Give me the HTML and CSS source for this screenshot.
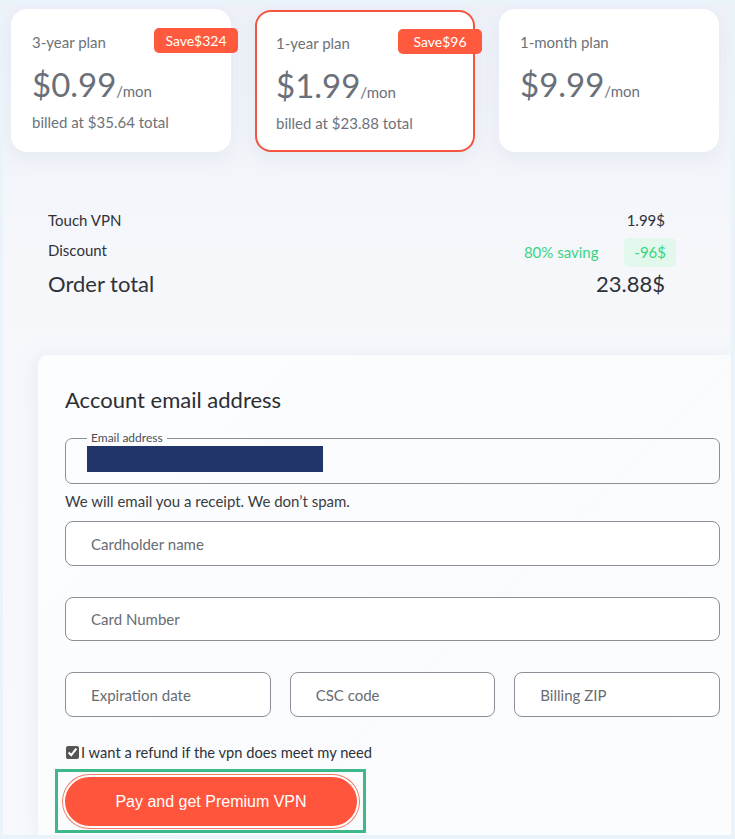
FILE: index.html
```html
<!DOCTYPE html>
<html lang="en">
<head>
    <meta charset="UTF-8">
    <meta name="viewport" content="width=device-width, initial-scale=1.0">
    <title>Touch VPN - Checkout</title>
    <link rel="stylesheet" href="styles.css">
</head>
<body>
    <div id="frame">
        <div id="page">
            <div class="plans">
                <div class="plan">
                    <span class="badge">Save$324</span>
                    <p class="plan-name">3-year plan</p>
                    <p class="plan-price">$0.99<span class="per">/mon</span></p>
                    <p class="plan-billed">billed at $35.64 total</p>
                </div>
                <div class="plan selected">
                    <span class="badge">Save$96</span>
                    <p class="plan-name">1-year plan</p>
                    <p class="plan-price">$1.99<span class="per">/mon</span></p>
                    <p class="plan-billed">billed at $23.88 total</p>
                </div>
                <div class="plan">
                    <p class="plan-name">1-month plan</p>
                    <p class="plan-price">$9.99<span class="per">/mon</span></p>
                </div>
            </div>

            <div class="summary">
                <div class="row">
                    <span>Touch VPN</span>
                    <span>1.99$</span>
                </div>
                <div class="row discount">
                    <span class="label">Discount</span>
                    <span class="saving">80% saving <span class="pill">-96$</span></span>
                </div>
                <div class="row total">
                    <span>Order total</span>
                    <span>23.88$</span>
                </div>
            </div>

            <form class="checkout">
                <h2>Account email address</h2>
                <fieldset class="email">
                    <legend>Email address</legend>
                    <div class="redacted"></div>
                </fieldset>
                <p class="note">We will email you a receipt. We don’t spam.</p>

                <input class="field" type="text" placeholder="Cardholder name">
                <input class="field spaced" type="text" placeholder="Card Number">
                <div class="field-row">
                    <input class="field" type="text" placeholder="Expiration date">
                    <input class="field" type="text" placeholder="CSC code">
                    <input class="field" type="text" placeholder="Billing ZIP">
                </div>

                <label class="refund">
                    <input type="checkbox" checked> I want a refund if the vpn does meet my need
                </label>

                <div class="highlight">
                    <button type="button" id="pay-button">Pay and get Premium VPN</button>
                </div>
            </form>
        </div>
    </div>
</body>
</html>
```

FILE: styles.css
```css
* {
    box-sizing: border-box;
}

body {
    margin: 0;
    font-family: Lato, "Open Sans", sans-serif;
    background-color: #eaf3f9;
}

#frame {
    padding: 4px 4px 4px 3px;
    height: 839px;
}

#page {
    height: 831px;
    background: linear-gradient(180deg, #eef1f8 0%, #f5f7fb 30%, #f7f9fc 100%);
    overflow: hidden;
}

p {
    margin: 0;
}

/* plan cards */
.plans {
    display: flex;
    gap: 24px;
    padding: 5px 0 0 8px;
}

.plan {
    position: relative;
    width: 220px;
    height: 143px;
    padding: 21px 19px;
    background: #fff;
    border: 2px solid #fff;
    border-radius: 16px;
    box-shadow: 0 6px 18px rgba(190, 200, 225, 0.25);
    color: #6d7279;
}

.plan.selected {
    border-color: #f5553f;
    height: 142px;
    margin-top: 1px;
}

.plan-name {
    font-size: 15px;
    line-height: 20px;
}

.plan-price {
    margin-top: 12px;
    font-size: 33px;
    line-height: 40px;
    color: #6a7079;
}

.per {
    font-size: 15px;
}

.plan-billed {
    margin-top: 1px;
    font-size: 15px;
    line-height: 20px;
}

.badge {
    position: absolute;
    top: 17px;
    right: -9px;
    width: 84px;
    height: 25px;
    line-height: 25px;
    text-align: center;
    background: #ff5a3d;
    color: #fff;
    font-size: 14px;
    border-radius: 5px;
}

/* order summary */
.summary {
    padding: 58px 66px 0 45px;
    color: #2f3238;
}

.row {
    display: flex;
    justify-content: space-between;
    align-items: center;
    font-size: 15px;
    line-height: 20px;
}

.row.discount {
    margin-top: 8px;
    height: 29px;
}

.row.discount .label {
    margin-top: -5px;
}

.saving {
    color: #3ad47f;
    font-size: 15px;
}

.pill {
    display: inline-block;
    margin-left: 22px;
    margin-right: -11px;
    padding: 0 10px;
    line-height: 29px;
    background: #e2f8ec;
    border-radius: 5px;
}

.row.total {
    margin-top: 3px;
    font-size: 22px;
    line-height: 28px;
}

/* checkout form */
.checkout {
    margin: 57px 0 0 35px;
    height: 480px;
    padding: 31px 11px 0 27px;
    background: linear-gradient(135deg, #fcfdfe 0%, #f9fbfd 60%, #fbfcfd 100%);
    border-radius: 10px 0 0 0;
    box-shadow: -4px 0 16px rgba(200, 210, 230, 0.25);
}

.checkout h2 {
    margin: 0;
    font-size: 22px;
    font-weight: normal;
    line-height: 28px;
    color: #2b2e33;
}

.email {
    margin: 17px 0 0;
    padding: 0 21px 11px;
    border: 1px solid #8b9098;
    border-radius: 7px;
}

.email legend {
    padding: 0 4px;
    font-size: 12px;
    line-height: 14px;
    color: #4a4e55;
}

.redacted {
    width: 236px;
    height: 26px;
    margin-top: 1px;
    background: #22356b;
}

.note {
    margin-top: 8px;
    font-size: 15px;
    line-height: 18px;
    color: #3a3d42;
}

.field {
    display: block;
    width: 100%;
    height: 45px;
    margin-top: 11px;
    padding: 0 25px;
    font-family: Lato, sans-serif;
    font-size: 15px;
    background: #fff;
    border: 1px solid #8b9098;
    border-radius: 8px;
}

.field::placeholder {
    color: #686c73;
}

.field.spaced {
    margin-top: 31px;
    height: 44px;
}

.field-row {
    display: grid;
    grid-template-columns: repeat(3, 1fr);
    gap: 19px;
    margin-top: 31px;
}

.field-row .field {
    margin-top: 0;
}

.refund {
    display: flex;
    align-items: center;
    gap: 2px;
    margin-top: 26px;
    font-size: 14.7px;
    line-height: 18px;
    color: #2f3238;
}

.refund input {
    margin: 0 0 0 1px;
    width: 13px;
    height: 13px;
    accent-color: #555;
}

.highlight {
    width: 311px;
    height: 64px;
    margin: 8px 0 0 -10px;
    padding: 2px 4px 1px 5px;
    border: 3px solid #3cb88b;
}

#pay-button {
    width: 296px;
    height: 53px;
    margin-top: 1px;
    background: #ff553d;
    color: #fff;
    font-family: "Liberation Sans", Arial, sans-serif;
    font-size: 16px;
    border: 2px solid #fff;
    border-radius: 27px;
    box-shadow: 0 0 0 1px #f07a68;
    cursor: pointer;
}
```
